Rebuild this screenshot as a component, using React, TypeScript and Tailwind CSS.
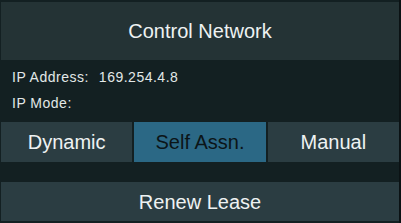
export default function App() {
  const modes = [
    { label: 'Dynamic', active: false },
    { label: 'Self Assn.', active: true },
    { label: 'Manual', active: false },
  ]

  return (
    <div className="w-[401px] h-[223px] bg-[#0b1214] font-['Liberation_Sans',Arial,sans-serif]">
      <div className="w-[399px] h-[223px] bg-[#132022] pt-[2px] pl-[1px] pb-[2px] flex flex-col">
        {/* Header */}
        <div className="h-[58px] bg-[#243335] flex items-center justify-center text-[20px] text-[#eef2f2]">
          Control Network
        </div>

        {/* Info */}
        <div className="h-[62px] pl-[11px] pt-[4px] text-[14px] tracking-[0.5px] text-[#e2e8e8] flex flex-col">
          <div className="h-[26px] flex items-center">
            <span>IP Address:</span>
            <span className="ml-[10px]">169.254.4.8</span>
          </div>
          <div className="h-[26px] flex items-center">IP Mode:</div>
        </div>

        {/* Mode buttons */}
        <div className="h-[40px] grid grid-cols-3 gap-[2px]">
          {modes.map((m) => (
            <div
              key={m.label}
              className={
                m.active
                  ? 'bg-[#2b6885] text-[#0b1518] flex items-center justify-center text-[20px]'
                  : 'bg-[#2b3d42] text-[#eef2f2] flex items-center justify-center text-[20px]'
              }
            >
              {m.label}
            </div>
          ))}
        </div>

        <div className="h-[20px]" />

        {/* Renew */}
        <div className="h-[39px] bg-[#2b3d42] flex items-center justify-center text-[20px] text-[#eef2f2]">
          Renew Lease
        </div>
      </div>
    </div>
  )
}
